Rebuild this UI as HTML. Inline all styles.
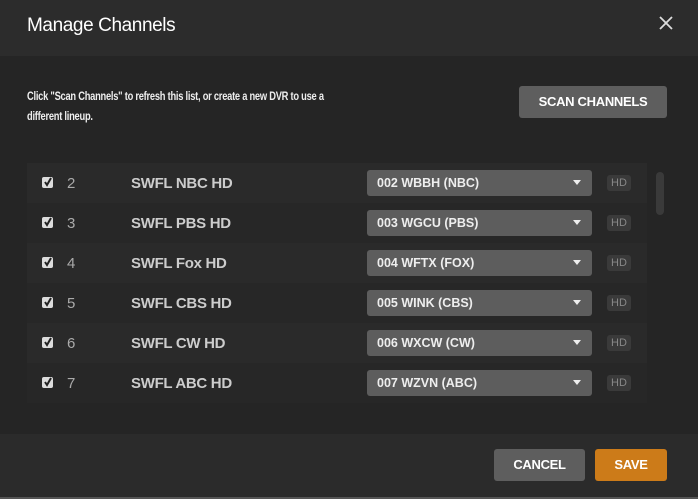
<!DOCTYPE html>
<html><head><style>
body{margin:0;width:698px;height:499px;background:#252525;font-family:"Liberation Sans",sans-serif;position:relative;overflow:hidden}
.hdr{position:absolute;left:0;top:0;width:698px;height:56px;background:#2c2c2c}
.title{position:absolute;left:27px;top:15px;color:#fff;font-size:19px;letter-spacing:-0.4px}
.x{position:absolute;left:657px;top:14px}
.desc{position:absolute;left:27px;top:87px;color:#eee;font-size:11.5px;line-height:20px;letter-spacing:-0.3px;font-weight:bold;transform:scaleX(0.81);transform-origin:0 0;white-space:nowrap}
.btn{position:absolute;background:#5e5e5e;color:#fff;font-weight:bold;font-size:13px;text-align:center;border-radius:3px;letter-spacing:-0.3px}
.row{position:absolute;left:27px;width:620px;height:40px}
.row.a{background:#2a2a2a}.row.b{background:#272727}
.cb{position:absolute;left:15px;top:14px;width:11px;height:11px;background:#ddd;border-radius:2px}
.cb svg{position:absolute;left:1px;top:0}
.num{position:absolute;left:40px;top:12px;color:#aaa;font-size:15px}
.nm{position:absolute;left:104px;top:12px;color:#ccc;font-size:15px;font-weight:bold;letter-spacing:-0.3px}
.dd{position:absolute;left:340px;top:7px;width:225px;height:26px;background:#5d5d5d;border-radius:3px;color:#eee;font-size:12.5px;font-weight:bold;line-height:26px;text-indent:10px}
.dd:after{content:"";position:absolute;right:11px;top:10px;border-left:4px solid transparent;border-right:4px solid transparent;border-top:5px solid #eee}
.hd{position:absolute;left:580px;top:12px;width:24px;height:16px;background:#3a3a3a;border-radius:3px;color:#888;font-size:11px;line-height:16px;text-align:center}
.sb{position:absolute;left:656px;top:172px;width:8px;height:43px;background:#3a3a3a;border-radius:4px}
.ftr{position:absolute;left:0;top:434px;width:698px;height:64px;background:#2b2b2b}
.line{position:absolute;left:0;top:497px;width:698px;height:2px;background:#555}
</style></head><body>
<div class="hdr"><div class="title">Manage Channels</div>
<svg class="x" width="18" height="18" viewBox="0 0 18 18"><path d="M3 3L15 15M15 3L3 15" stroke="#ddd" stroke-width="1.8"/></svg></div>
<div class="desc">Click "Scan Channels" to refresh this list, or create a new DVR to use a<br>different lineup.</div>
<div class="btn" style="left:519px;top:86px;width:148px;height:32px;line-height:32px">SCAN CHANNELS</div>

<div class="row a" style="top:163px"><div class="cb"><svg width="10" height="10" viewBox="0 0 10 10"><path d="M2 5L4 8L8 1" stroke="#222" stroke-width="2" fill="none"/></svg></div><div class="num">2</div><div class="nm">SWFL NBC HD</div><div class="dd">002 WBBH (NBC)</div><div class="hd">HD</div></div>
<div class="row b" style="top:203px"><div class="cb"><svg width="10" height="10" viewBox="0 0 10 10"><path d="M2 5L4 8L8 1" stroke="#222" stroke-width="2" fill="none"/></svg></div><div class="num">3</div><div class="nm">SWFL PBS HD</div><div class="dd">003 WGCU (PBS)</div><div class="hd">HD</div></div>
<div class="row a" style="top:243px"><div class="cb"><svg width="10" height="10" viewBox="0 0 10 10"><path d="M2 5L4 8L8 1" stroke="#222" stroke-width="2" fill="none"/></svg></div><div class="num">4</div><div class="nm">SWFL Fox HD</div><div class="dd">004 WFTX (FOX)</div><div class="hd">HD</div></div>
<div class="row b" style="top:283px"><div class="cb"><svg width="10" height="10" viewBox="0 0 10 10"><path d="M2 5L4 8L8 1" stroke="#222" stroke-width="2" fill="none"/></svg></div><div class="num">5</div><div class="nm">SWFL CBS HD</div><div class="dd">005 WINK (CBS)</div><div class="hd">HD</div></div>
<div class="row a" style="top:323px"><div class="cb"><svg width="10" height="10" viewBox="0 0 10 10"><path d="M2 5L4 8L8 1" stroke="#222" stroke-width="2" fill="none"/></svg></div><div class="num">6</div><div class="nm">SWFL CW HD</div><div class="dd">006 WXCW (CW)</div><div class="hd">HD</div></div>
<div class="row b" style="top:363px"><div class="cb"><svg width="10" height="10" viewBox="0 0 10 10"><path d="M2 5L4 8L8 1" stroke="#222" stroke-width="2" fill="none"/></svg></div><div class="num">7</div><div class="nm">SWFL ABC HD</div><div class="dd">007 WZVN (ABC)</div><div class="hd">HD</div></div>
<div class="sb"></div>

<div class="ftr"></div>
<div class="btn" style="left:494px;top:449px;width:91px;height:32px;line-height:32px">CANCEL</div>
<div class="btn" style="left:595px;top:449px;width:72px;height:32px;line-height:32px;background:#cc7b19">SAVE</div>
<div class="line"></div>
</body></html>
